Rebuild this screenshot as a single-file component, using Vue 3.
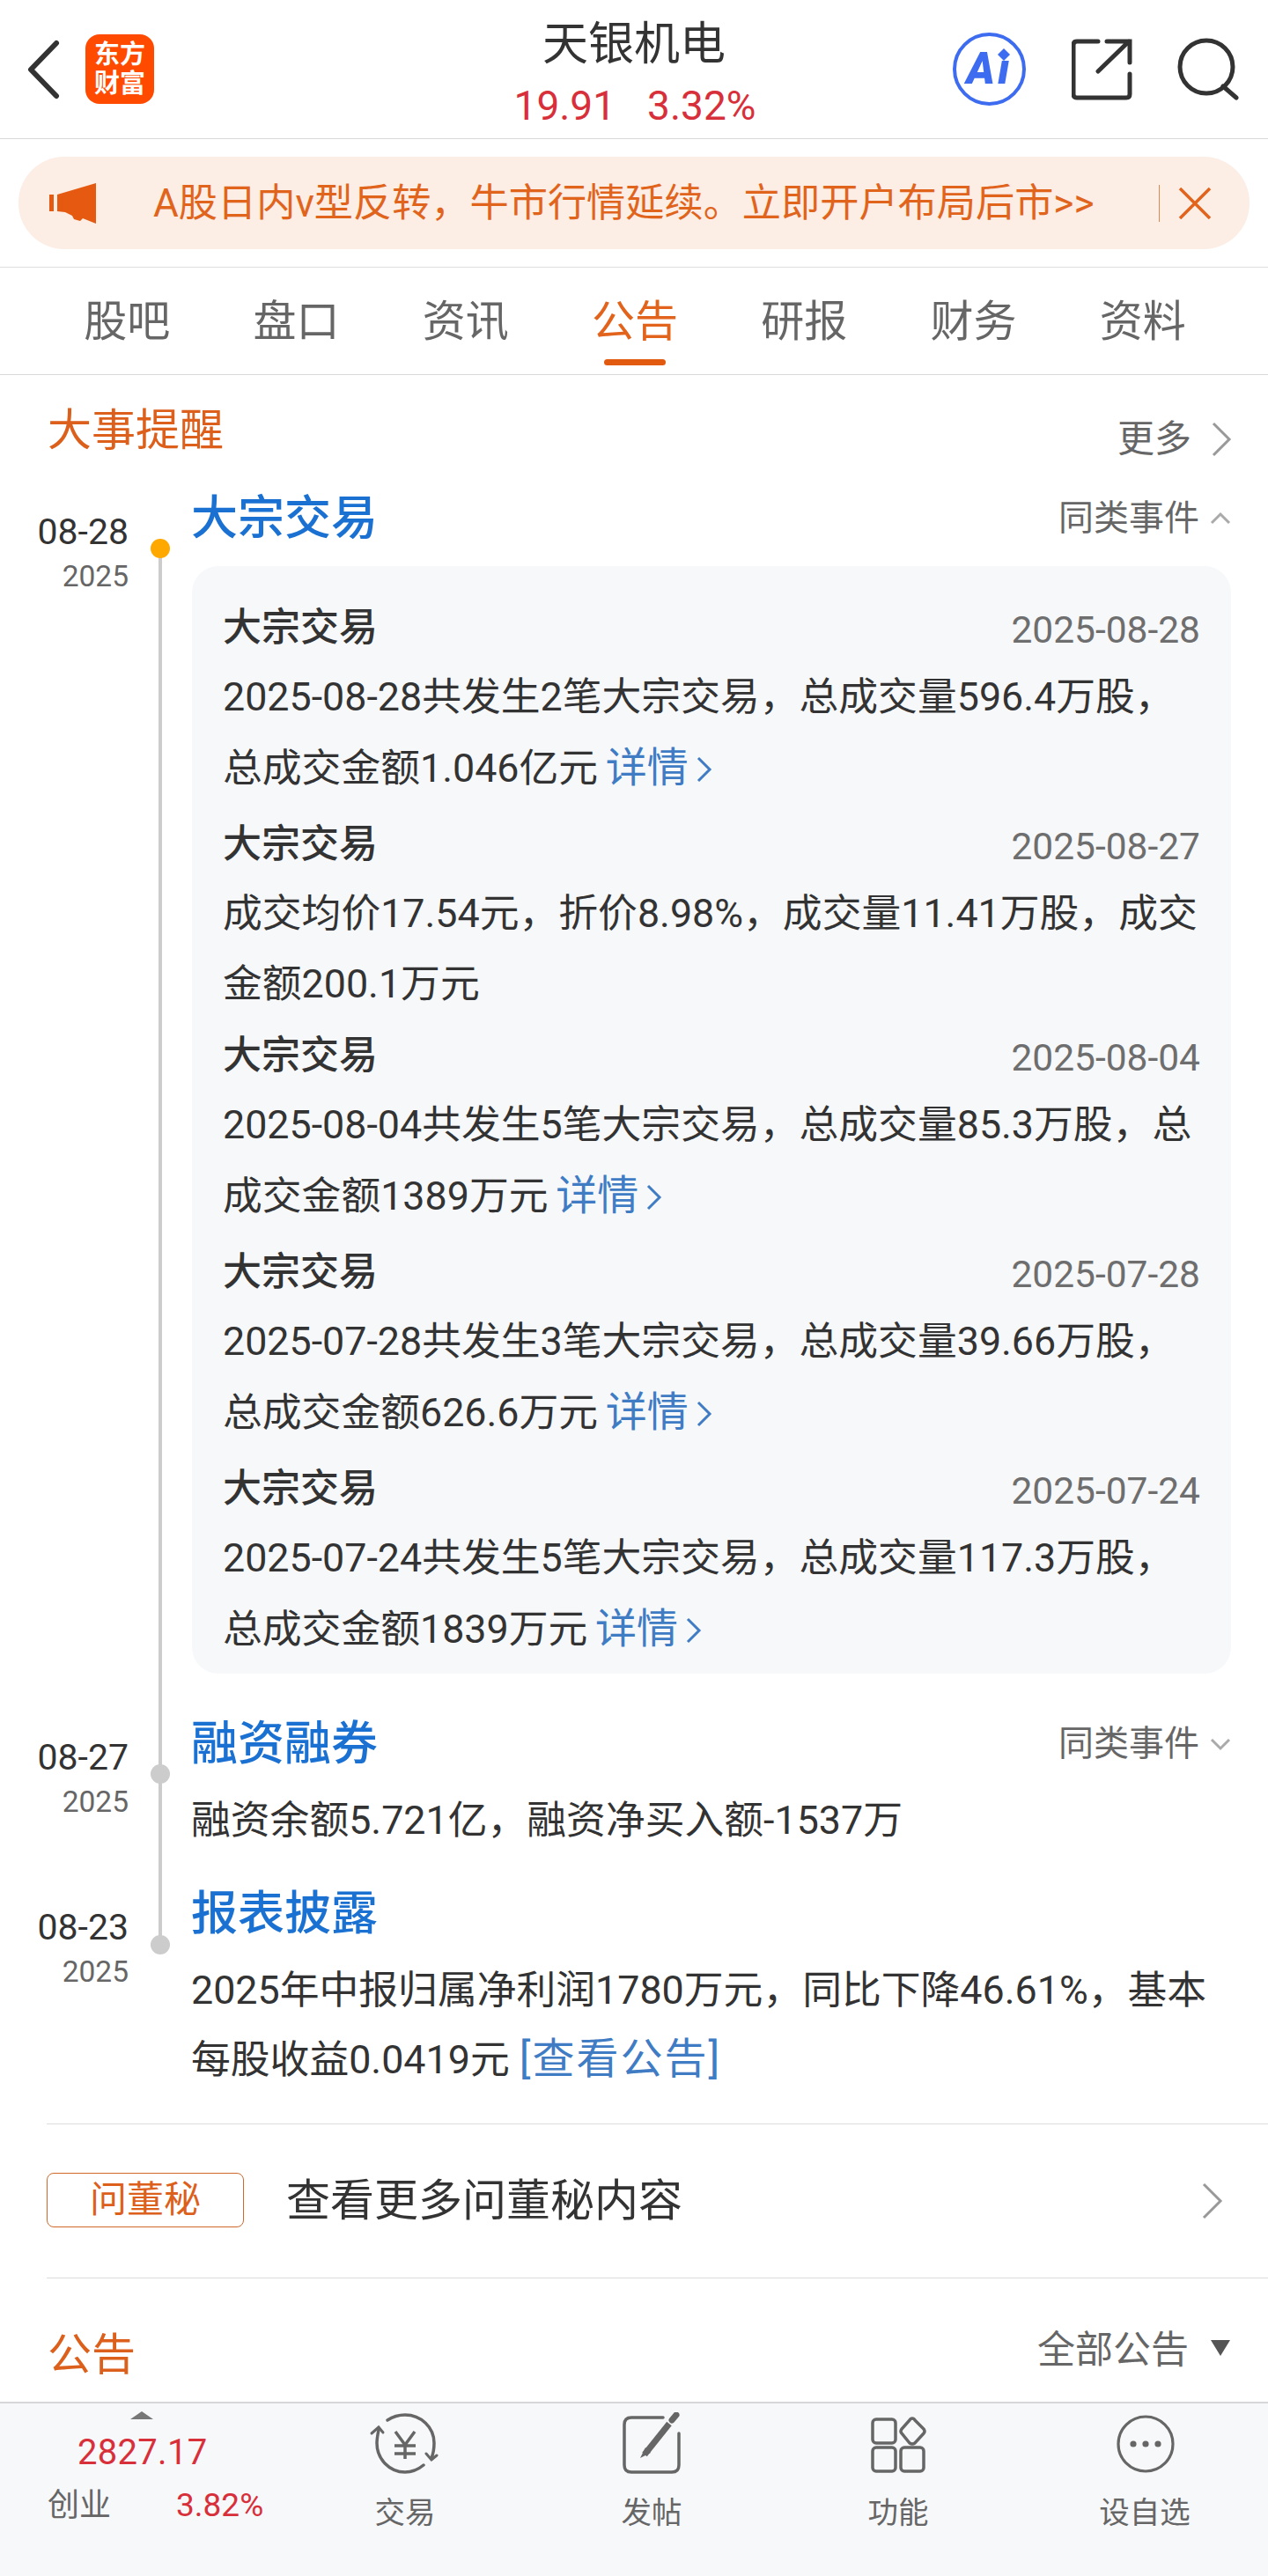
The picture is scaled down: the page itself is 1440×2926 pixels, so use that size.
<script setup>
const tabs = ['股吧', '盘口', '资讯', '公告', '研报', '财务', '资料']
const items = [
  { date: '2025-08-28', l1: '2025-08-28共发生2笔大宗交易，总成交量596.4万股，', l2: '总成交金额1.046亿元', link: true },
  { date: '2025-08-27', l1: '成交均价17.54元，折价8.98%，成交量11.41万股，成交', l2: '金额200.1万元', link: false },
  { date: '2025-08-04', l1: '2025-08-04共发生5笔大宗交易，总成交量85.3万股，总', l2: '成交金额1389万元', link: true },
  { date: '2025-07-28', l1: '2025-07-28共发生3笔大宗交易，总成交量39.66万股，', l2: '总成交金额626.6万元', link: true },
  { date: '2025-07-24', l1: '2025-07-24共发生5笔大宗交易，总成交量117.3万股，', l2: '总成交金额1839万元', link: true }
]
</script>

<template>
  <div class="page">
    <header class="top">
      <svg class="back" width="42" height="68" viewBox="0 0 42 68"><path d="M35 4 L6 34 L35 64" fill="none" stroke="#333" stroke-width="6" stroke-linecap="round" stroke-linejoin="round"/></svg>
      <div class="logo"><span>东方</span><span>财富</span></div>
      <div class="center">
        <div class="name">天银机电</div>
        <div class="quote"><span>19.91</span><span>3.32%</span></div>
      </div>
      <div class="ai"><span class="ai-t">Aı</span><svg class="spark" width="14" height="14" viewBox="0 0 14 14"><path d="M7 0 L14 7 L7 14 L0 7Z" fill="#3d6cf0"/></svg></div>
      <svg class="share" width="70" height="70" viewBox="0 0 70 70"><path d="M30 3 H6 Q2 3 2 7 V63 Q2 67 6 67 H62 Q66 67 66 63 V40" fill="none" stroke="#333" stroke-width="5" stroke-linecap="round"/><path d="M30 37 L65 3 M40 3 H66 V27" fill="none" stroke="#333" stroke-width="5" stroke-linecap="round"/></svg>
      <svg class="search" width="70" height="72" viewBox="0 0 70 72"><circle cx="33" cy="33" r="30" fill="none" stroke="#333" stroke-width="5"/><path d="M52 55 L67 68" stroke="#333" stroke-width="5" stroke-linecap="round"/></svg>
    </header>

    <section class="banner-wrap">
      <div class="banner">
        <svg class="horn" width="54" height="48" viewBox="0 0 54 48"><path d="M0 14 H5 V33 H0Z M9 14 L53 1 V47 L38 41 L35 44 L28 42 L26 38 L18 34 L9 33Z" fill="#e55a10"/></svg>
        <span class="banner-text">A股日内v型反转，牛市行情延续。立即开户布局后市&gt;&gt;</span>
        <i class="sep"></i>
        <svg class="close" width="38" height="36" viewBox="0 0 38 36"><path d="M2 1 L36 35 M36 1 L2 35" stroke="#e2631c" stroke-width="3.5"/></svg>
      </div>
    </section>

    <nav class="tabs">
      <div v-for="t in tabs" :key="t" class="tab" :class="{ on: t === '公告' }">{{ t }}</div>
    </nav>

    <div class="sec-head">
      <h2 class="sec-title">大事提醒</h2>
      <div class="more">更多<svg width="24" height="40" viewBox="0 0 24 40"><path d="M3 2 L21 20 L3 38" fill="none" stroke="#999" stroke-width="3"/></svg></div>
    </div>

    <div class="tl">
      <div class="row row-1">
        <div class="when"><div class="md">08-28</div><div class="yr">2025</div></div>
        <div class="rail first"><i class="dot gold"></i></div>
        <div class="body">
          <div class="ev-head">
            <span class="ev-title">大宗交易</span>
            <span class="same">同类事件<svg width="26" height="16" viewBox="0 0 26 16"><path d="M3 13 L13 3 L23 13" fill="none" stroke="#aaa" stroke-width="3"/></svg></span>
          </div>
          <div class="card">
            <div v-for="it in items" :key="it.date" class="item" :class="{ short: !it.link }">
              <div class="it-head"><span class="it-title">大宗交易</span><span class="it-date">{{ it.date }}</span></div>
              <div class="it-line first-line">{{ it.l1 }}</div>
              <div class="it-line">{{ it.l2 }}<span v-if="it.link" class="link"> 详情<svg width="20" height="32" viewBox="0 0 20 32"><path d="M3 3 L16 16 L3 29" fill="none" stroke="#3f7cc4" stroke-width="3"/></svg></span></div>
            </div>
          </div>
        </div>
      </div>

      <div class="row row-2">
        <div class="when"><div class="md">08-27</div><div class="yr">2025</div></div>
        <div class="rail"><i class="dot"></i></div>
        <div class="body">
          <div class="ev-head">
            <span class="ev-title">融资融券</span>
            <span class="same">同类事件<svg width="26" height="16" viewBox="0 0 26 16"><path d="M3 3 L13 13 L23 3" fill="none" stroke="#aaa" stroke-width="3"/></svg></span>
          </div>
          <p class="ev-text single">融资余额5.721亿，融资净买入额-1537万</p>
        </div>
      </div>

      <div class="row row-3">
        <div class="when"><div class="md">08-23</div><div class="yr">2025</div></div>
        <div class="rail last"><i class="dot"></i></div>
        <div class="body">
          <div class="ev-head"><span class="ev-title">报表披露</span></div>
          <p class="ev-text">2025年中报归属净利润1780万元，同比下降46.61%，基本<br>每股收益0.0419元 <span class="notice">[查看公告]</span></p>
        </div>
      </div>
    </div>

    <div class="dm">
      <span class="badge">问董秘</span>
      <span class="dm-text">查看更多问董秘内容</span>
      <svg class="dm-arrow" width="24" height="44" viewBox="0 0 24 44"><path d="M2 3 L21 22 L2 41" fill="none" stroke="#999" stroke-width="3"/></svg>
    </div>

    <div class="notice-head">
      <h2 class="sec-title">公告</h2>
      <div class="all">全部公告<i class="tri-down"></i></div>
    </div>

    <footer class="foot">
      <div class="index">
        <i class="tri-up"></i>
        <div class="idx-val">2827.17</div>
        <div class="idx-sub"><span class="idx-name">创业</span><span class="idx-pct">3.82%</span></div>
      </div>
      <div class="act">
        <svg width="82" height="72" viewBox="0 0 82 72" fill="none" stroke="#666" stroke-width="3.5" stroke-linecap="round"><path d="M21 9 C27 5 34 3 41 3 C59 3 74 17 74 35 C74 41 73 47 71 52"/><path d="M65 47 L71 54 L77 49" stroke-width="3"/><path d="M62 60 C56 65 49 68 41 68 C23 68 9 53 9 35 C9 30 10 25 11 20"/><path d="M3 24 L11 17 L16 23" stroke-width="3"/><path d="M30 22 L41 37 L52 22 M29 38 H53 M29 47 H53 M41 37 V53" stroke-linecap="butt"/></svg>
        <span>交易</span>
      </div>
      <div class="act">
        <svg width="70" height="72" viewBox="0 0 70 72" fill="none" stroke="#666"><path d="M48 6 H12 Q4 6 4 14 V60 Q4 68 12 68 H58 Q66 68 66 60 V24" stroke-width="3.5" stroke-linecap="round"/><path d="M27 48 L55 13" stroke-width="7"/><path d="M58 9 L63 3" stroke-width="7" stroke-linecap="round"/><path d="M28 40 L22 52 L34 46Z" fill="#666" stroke="none"/></svg>
        <span>发帖</span>
      </div>
      <div class="act">
        <svg width="66" height="72" viewBox="0 0 66 72" fill="none" stroke="#666" stroke-width="3.5"><rect x="4" y="8" width="26" height="27" rx="4"/><rect x="4" y="40" width="26" height="27" rx="4"/><rect x="36" y="40" width="26" height="27" rx="4"/><path d="M49 7 Q51 7 52 9 L62 19 Q64 22 62 24 L52 35 Q49 37 46 35 L37 24 Q35 22 37 19 L46 9 Q47 7 49 7Z"/></svg>
        <span>功能</span>
      </div>
      <div class="act">
        <svg class="more-ic" width="70" height="72" viewBox="0 0 70 72" fill="none"><circle cx="35" cy="36" r="31" stroke="#666" stroke-width="3.2"/><circle cx="21" cy="36" r="3.6" fill="#666"/><circle cx="35" cy="36" r="3.6" fill="#666"/><circle cx="49" cy="36" r="3.6" fill="#666"/></svg>
        <span>设自选</span>
      </div>
    </footer>
  </div>
</template>

<style>
html, body { margin: 0; background: #fff; }
</style>

<style scoped>
.page { width: 1440px; height: 2926px; background: #fff; color: #333; font-family: Roboto, "Noto Sans CJK SC", sans-serif; overflow: hidden; }
.top { height: 157px; border-bottom: 1px solid #d9d9d9; position: relative; display: flex; align-items: center; }
.back { margin-left: 29px; flex: none; }
.logo { margin-left: 26px; width: 78px; height: 79px; flex: none; background: #ff4a00; border-radius: 16px; color: #fff; font-size: 29px; line-height: 33px; font-weight: 700; display: flex; flex-direction: column; align-items: center; justify-content: center; }
.center { position: absolute; left: 0; right: 0; top: 21px; display: flex; flex-direction: column; align-items: center; pointer-events: none; }
.name { font-size: 52px; line-height: 60px; color: #333; }
.quote { margin-top: 15px; font-size: 46px; line-height: 48px; color: #d8303a; display: flex; gap: 36px; margin-left: 2px; }
.ai { margin-left: auto; width: 83px; height: 83px; box-sizing: border-box; border: 4px solid #3d6cf0; border-radius: 50%; position: relative; display: flex; align-items: center; justify-content: center; flex: none; }
.ai-t { font-family: Roboto, sans-serif; font-size: 49px; line-height: 49px; font-weight: 900; font-style: italic; color: #3d6cf0; letter-spacing: 3px; }
.spark { position: absolute; left: 47px; top: 14px; }
.share { margin-left: 52px; flex: none; }
.search { margin-left: 50px; margin-right: 33px; flex: none; }

.banner-wrap { height: 145px; border-bottom: 1px solid #dedede; box-sizing: content-box; display: flex; align-items: center; padding: 0 21px; }
.banner { flex: 1; height: 105px; border-radius: 52px; background: #fcede5; display: flex; align-items: center; padding-left: 35px; }
.horn { flex: none; }
.banner-text { margin-left: 64px; font-size: 44.2px; line-height: 60px; color: #e0641c; white-space: nowrap; width: 1142px; flex: none; }
.sep { width: 1px; height: 42px; background: #dd8a52; flex: none; }
.close { margin-left: 21px; flex: none; }

.tabs { height: 121px; border-bottom: 1px solid #d9d9d9; display: flex; padding: 0 46px 0 48px; }
.tab { flex: 1; text-align: center; font-size: 49px; line-height: 70px; padding-top: 27px; color: #666; position: relative; }
.tab.on { color: #e2631c; }
.tab.on::after { content: ""; position: absolute; left: 61px; width: 70px; top: 104px; height: 7px; border-radius: 4px; background: #e25a10; }

.sec-head { height: 130px; box-sizing: border-box; padding: 33px 41px 0 54px; display: flex; justify-content: space-between; align-items: flex-start; }
.sec-title { margin: 0; font-size: 50px; line-height: 60px; font-weight: 400; color: #dc5f1c; }
.more { margin-top: 10px; display: flex; align-items: center; gap: 22px; font-size: 42px; line-height: 60px; color: #666; }

.row { display: grid; grid-template-columns: 146px 72px 1180px; }
.row-1 { padding-bottom: 47px; }
.row-2 { padding-bottom: 33px; }
.when { text-align: right; padding-top: 28px; }
.md { font-size: 41px; line-height: 40px; color: #333; }
.yr { margin-top: 11px; font-size: 33.5px; line-height: 40px; color: #666; }
.rail { position: relative; margin-bottom: -47px; }
.row-2 .rail { margin-bottom: -33px; }
.rail::before { content: ""; position: absolute; left: 34px; width: 4px; top: 0; bottom: 0; background: #ccc; }
.rail.first::before { top: 67px; }
.rail.last { margin-bottom: 0; }
.rail.last::before { bottom: auto; height: 67px; }
.dot { position: absolute; left: 25px; top: 56px; width: 22px; height: 22px; border-radius: 50%; background: #ccc; }
.row-3 .dot { top: 57px; }
.dot.gold { background: #ffa800; }
.ev-head { display: flex; justify-content: space-between; align-items: center; height: 60px; box-sizing: border-box; padding-top: 6px; }
.ev-title { font-size: 53px; line-height: 54px; font-weight: 500; color: #1a71d2; margin-left: -1px; }
.same { display: flex; align-items: center; gap: 11px; font-size: 40px; line-height: 54px; color: #666; margin-right: -1px; }
.card { margin-top: 27px; height: 1258px; box-sizing: border-box; background: #f7f8fa; border-radius: 30px; padding: 40px 35px 0 36px; }
.item { padding-bottom: 17px; }
.item.short { padding-bottom: 11px; }
.it-head { height: 60px; display: flex; justify-content: space-between; align-items: center; }
.it-title { font-size: 44px; line-height: 60px; font-weight: 500; color: #333; margin-left: -1px; }
.it-date { font-size: 42.5px; line-height: 60px; color: #6e6e6e; padding-top: 5px; }
.it-line { font-size: 44.8px; line-height: 80px; height: 80px; color: #333; white-space: nowrap; margin-left: -1px; }
.first-line { margin-top: 9px; }
.link { font-size: 47px; color: #3f7cc4; margin-left: -3px; }
.link svg { margin-left: 8px; vertical-align: -2px; }
.ev-text { margin: 21px 0 0; font-size: 44.8px; line-height: 78px; color: #333; white-space: nowrap; margin-left: -1px; }
.ev-text.single { margin-top: 20px; line-height: 80px; }
.notice { font-size: 48px; color: #3f7cc4; letter-spacing: 2px; }

.dm { margin: 33px 0 0 53px; height: 174px; border-top: 1px solid #dcdcdc; border-bottom: 1px solid #dcdcdc; display: flex; align-items: center; }
.badge { width: 224px; height: 62px; box-sizing: border-box; border: 1.5px solid #d0682c; border-radius: 8px; text-align: center; font-size: 42px; line-height: 60px; color: #dc5f1c; flex: none; margin-bottom: 2px; }
.dm-text { margin-left: 48px; font-size: 50px; line-height: 60px; color: #333; }
.dm-arrow { margin-left: auto; margin-right: 51px; }

.notice-head { height: 140px; box-sizing: border-box; padding: 57px 43px 0 54px; display: flex; justify-content: space-between; align-items: flex-start; }
.all { display: flex; align-items: flex-start; font-size: 43px; line-height: 52px; color: #666; margin-top: -2px; }
.tri-down { margin: 15px 0 0 25px; width: 0; height: 0; border-left: 11.5px solid transparent; border-right: 11.5px solid transparent; border-top: 18px solid #555; }

.foot { height: 199px; box-sizing: border-box; background: #f7f8fa; border-top: 2px solid #d6d6d8; display: flex; }
.index { width: 320px; flex: none; padding: 9px 0 0 54px; box-sizing: border-box; position: relative; }
.tri-up { display: block; margin-left: 94px; width: 0; height: 0; border-left: 13px solid transparent; border-right: 13px solid transparent; border-bottom: 9px solid #777; }
.idx-val { margin: 18px 0 0 34px; font-size: 40px; line-height: 40px; color: #d8303a; letter-spacing: .3px; }
.idx-sub { margin-top: 20px; display: flex; align-items: center; height: 40px; }
.idx-name { font-size: 36px; line-height: 40px; color: #666; }
.idx-pct { margin-left: 74px; font-size: 37px; line-height: 40px; color: #d8303a; }
.act { flex: 1; display: flex; flex-direction: column; align-items: center; padding-top: 10px; }
.act span { margin-top: 20px; font-size: 34.5px; line-height: 44px; color: #666; }
.more-ic { margin-left: 2px; }
</style>
